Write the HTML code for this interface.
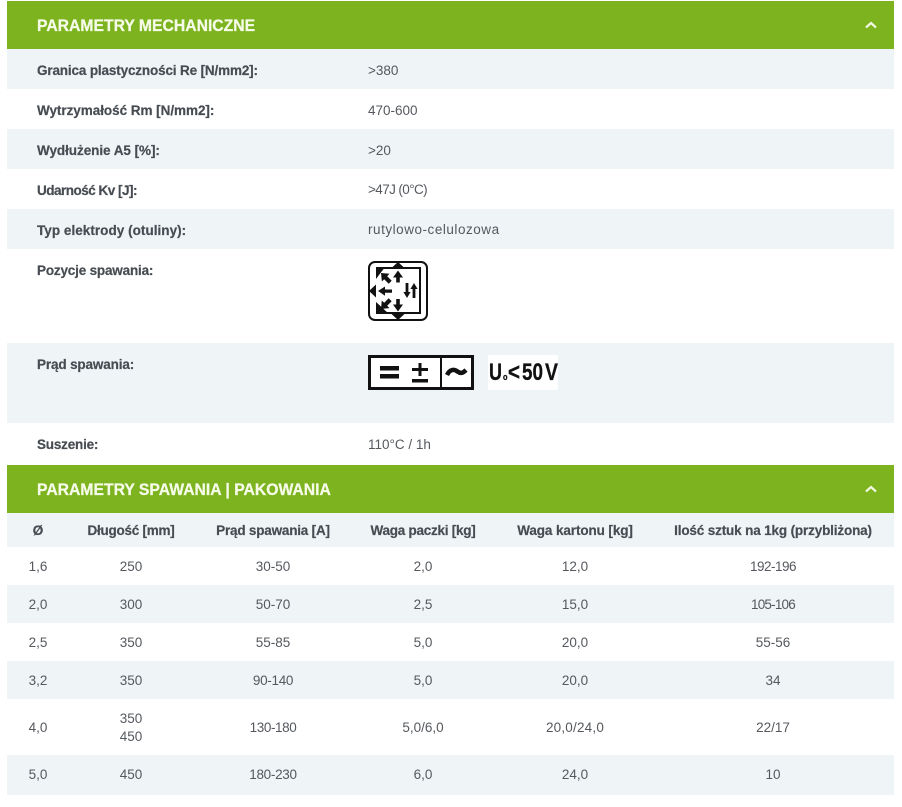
<!DOCTYPE html>
<html lang="pl"><head><meta charset="utf-8"><title>Parametry</title>
<style>
html,body{margin:0;padding:0;background:#fff}
#p{position:relative;width:902px;height:807px;overflow:hidden;background:#fff;font-family:"Liberation Sans",sans-serif;color:#4a4f55;font-size:13.5px}
.r{position:absolute}
.g{position:absolute;left:7px;width:887px;background:#7cb31f}
.g b{position:absolute;left:30px;top:14px;font-size:17px;line-height:22px;color:#f6fbe8;white-space:nowrap;transform:scaleX(.925);transform-origin:0 50%;-webkit-text-stroke:.3px #f6fbe8}
.g svg{position:absolute;left:857.500px;top:20px}
.l{position:absolute;left:37px;font-weight:bold;font-size:13.5px;line-height:18px;white-space:nowrap;color:#474c52;-webkit-text-stroke:.2px #474c52}
.v{position:absolute;left:368px;line-height:18px;white-space:nowrap;color:#55595e}
.c{position:absolute;width:200px;margin-left:-100px;text-align:center;line-height:18px;color:#55595e;white-space:nowrap}
.h{font-weight:bold;color:#474c52;letter-spacing:-.1px;-webkit-text-stroke:.2px #474c52}
</style></head><body><div id="p">
<div class="g" style="top:1px;height:48px"><b>PARAMETRY MECHANICZNE</b><svg width="12" height="8" viewBox="0 0 12 8"><path d="M1 6.500L6 2l5 4.500" fill="none" stroke="#f2f8e0" stroke-width="2.200"/></svg></div>
<div class="r" style="left:7px;top:49px;width:887px;height:40px;background:#eff4f7"></div>
<div class="r" style="left:7px;top:129px;width:887px;height:40px;background:#eff4f7"></div>
<div class="r" style="left:7px;top:209px;width:887px;height:40px;background:#eff4f7"></div>
<div class="r" style="left:7px;top:343px;width:887px;height:80px;background:#eff4f7"></div>
<div class="l" style="top:62px;letter-spacing:-.15px">Granica plastyczności Re [N/mm2]:</div><div class="v" style="top:61.500px">&gt;380</div>
<div class="l" style="top:102px;letter-spacing:-.04px">Wytrzymałość Rm [N/mm2]:</div><div class="v" style="top:101.500px">470-600</div>
<div class="l" style="top:142px;letter-spacing:-.05px">Wydłużenie A5 [%]:</div><div class="v" style="top:141.500px">&gt;20</div>
<div class="l" style="top:182px;letter-spacing:-.5px">Udarność Kv [J]:</div><div class="v" style="top:181px;letter-spacing:-.6px">&gt;47J (0°C)</div>
<div class="l" style="top:222px;letter-spacing:.04px">Typ elektrody (otuliny):</div><div class="v" style="top:221px;letter-spacing:.53px">rutylowo-celulozowa</div>
<div class="l" style="top:262px;letter-spacing:-.18px">Pozycje spawania:</div>
<div class="l" style="top:356px;letter-spacing:-.14px">Prąd spawania:</div>
<div class="l" style="top:436px;letter-spacing:-.2px">Suszenie:</div><div class="v" style="top:436px">110°C / 1h</div>

<svg class="r" style="left:367px;top:260px" width="62" height="62" viewBox="367 260 62 62">
<rect x="369" y="262" width="58" height="58" rx="6" fill="#fff" stroke="#111" stroke-width="2"/>
<path d="M376 268h44v45h-44" fill="none" stroke="#111" stroke-width="2"/>
<path d="M376 267h9l-9 12zM376 314v-12l13 12z" fill="#111"/>
<path d="M398 262l6.500 6h-13zM398 320l-6.500-6h13zM369 291l7-6.500v13z" fill="#111"/>
<path d="M398 270.500l5 7h-3.200v5h-3.600v-5H393zM398 311.500l-5-7h3.200v-5.500h3.600v5.500h3.200zM378 291l7-4.500v3h7v3.200h-7v3z" fill="#111"/>
<path d="M381 273l8.500.8-2.300 2.400 4.500 4.500-3 3-4.500-4.500-2.300 2.300zM381 309l.8-8.500 2.400 2.300 4.500-4.500 3 3-4.500 4.500 2.300 2.300z" fill="#111"/>
<path d="M405.600 283h2.800v9h2.200l-3.600 6-3.600-6h2.200zM414 283l3.600 6h-2.200v9h-2.800v-9h-2.200z" fill="#111"/>
</svg>

<svg class="r" style="left:367px;top:353px" width="195" height="40" viewBox="367 353 195 40">
<rect x="488" y="355" width="70" height="35" fill="#fff"/>
<rect x="369.500" y="356.500" width="103" height="32" fill="#fff" stroke="#111" stroke-width="3"/>
<path d="M441 356v33" stroke="#111" stroke-width="2"/>
<path d="M380 366h19v4.500h-19zM380 374h19v4.500h-19z" fill="#111"/>
<path d="M418.500 363h3v5h6.500v3h-6.500v5h-3v-5H412v-3h6.500zM412 379h16v3.500h-16z" fill="#111"/>
<path d="M447 375c3-6 7-6 10.500-3.500s5.500 1.500 8.500-1.500" fill="none" stroke="#111" stroke-width="4.500"/>
<g font-family="Liberation Sans,sans-serif" font-weight="bold" fill="#111" font-size="24" stroke="#111" stroke-width=".3">
<text x="489" y="380" textLength="13" lengthAdjust="spacingAndGlyphs">U</text>
<text x="503" y="380" font-size="9" textLength="4.500" lengthAdjust="spacingAndGlyphs">o</text>
<text x="508" y="380" textLength="12" lengthAdjust="spacingAndGlyphs">&lt;</text>
<text x="522" y="380" textLength="21" lengthAdjust="spacingAndGlyphs">50</text>
<text x="545" y="380" textLength="13" lengthAdjust="spacingAndGlyphs">V</text>
</g>
</svg>

<div class="g" style="top:465px;height:48px"><b>PARAMETRY SPAWANIA | PAKOWANIA</b><svg width="12" height="8" viewBox="0 0 12 8"><path d="M1 6.500L6 2l5 4.500" fill="none" stroke="#f2f8e0" stroke-width="2.200"/></svg></div>
<div class="r" style="left:7px;top:513px;width:887px;height:34px;background:#eff4f7"></div>
<div class="r" style="left:7px;top:585px;width:887px;height:38px;background:#eff4f7"></div>
<div class="r" style="left:7px;top:661px;width:887px;height:38px;background:#eff4f7"></div>
<div class="r" style="left:7px;top:755px;width:887px;height:40px;background:#eff4f7"></div>

<div class="c h" style="left:38px;top:522px">Ø</div><div class="c h" style="left:131px;top:522px;letter-spacing:-.25px">Długość [mm]</div><div class="c h" style="left:273px;top:522px;letter-spacing:-.2px">Prąd spawania [A]</div><div class="c h" style="left:423px;top:522px;letter-spacing:-.25px">Waga paczki [kg]</div><div class="c h" style="left:575px;top:522px">Waga kartonu [kg]</div><div class="c h" style="left:773px;top:522px;letter-spacing:-.15px">Ilość sztuk na 1kg (przybliżona)</div>

<div class="c" style="left:38px;top:558px">1,6</div><div class="c" style="left:131px;top:558px">250</div><div class="c" style="left:273px;top:558px">30-50</div><div class="c" style="left:423px;top:558px">2,0</div><div class="c" style="left:575px;top:558px">12,0</div><div class="c" style="left:773px;top:558px;letter-spacing:-.5px">192-196</div>
<div class="c" style="left:38px;top:596px">2,0</div><div class="c" style="left:131px;top:596px">300</div><div class="c" style="left:273px;top:596px">50-70</div><div class="c" style="left:423px;top:596px">2,5</div><div class="c" style="left:575px;top:596px">15,0</div><div class="c" style="left:773px;top:596px;letter-spacing:-.8px">105-106</div>
<div class="c" style="left:38px;top:634px">2,5</div><div class="c" style="left:131px;top:634px">350</div><div class="c" style="left:273px;top:634px">55-85</div><div class="c" style="left:423px;top:634px">5,0</div><div class="c" style="left:575px;top:634px">20,0</div><div class="c" style="left:773px;top:634px">55-56</div>
<div class="c" style="left:38px;top:672px">3,2</div><div class="c" style="left:131px;top:672px">350</div><div class="c" style="left:273px;top:672px;letter-spacing:-.3px">90-140</div><div class="c" style="left:423px;top:672px">5,0</div><div class="c" style="left:575px;top:672px">20,0</div><div class="c" style="left:773px;top:672px">34</div>
<div class="c" style="left:38px;top:719px">4,0</div><div class="c" style="left:131px;top:710px">350<br>450</div><div class="c" style="left:273px;top:719px;letter-spacing:-.4px">130-180</div><div class="c" style="left:423px;top:719px">5,0/6,0</div><div class="c" style="left:575px;top:719px;letter-spacing:.2px">20,0/24,0</div><div class="c" style="left:773px;top:719px">22/17</div>
<div class="c" style="left:38px;top:766px">5,0</div><div class="c" style="left:131px;top:766px">450</div><div class="c" style="left:273px;top:766px;letter-spacing:-.3px">180-230</div><div class="c" style="left:423px;top:766px">6,0</div><div class="c" style="left:575px;top:766px">24,0</div><div class="c" style="left:773px;top:766px">10</div>
</div></body></html>
